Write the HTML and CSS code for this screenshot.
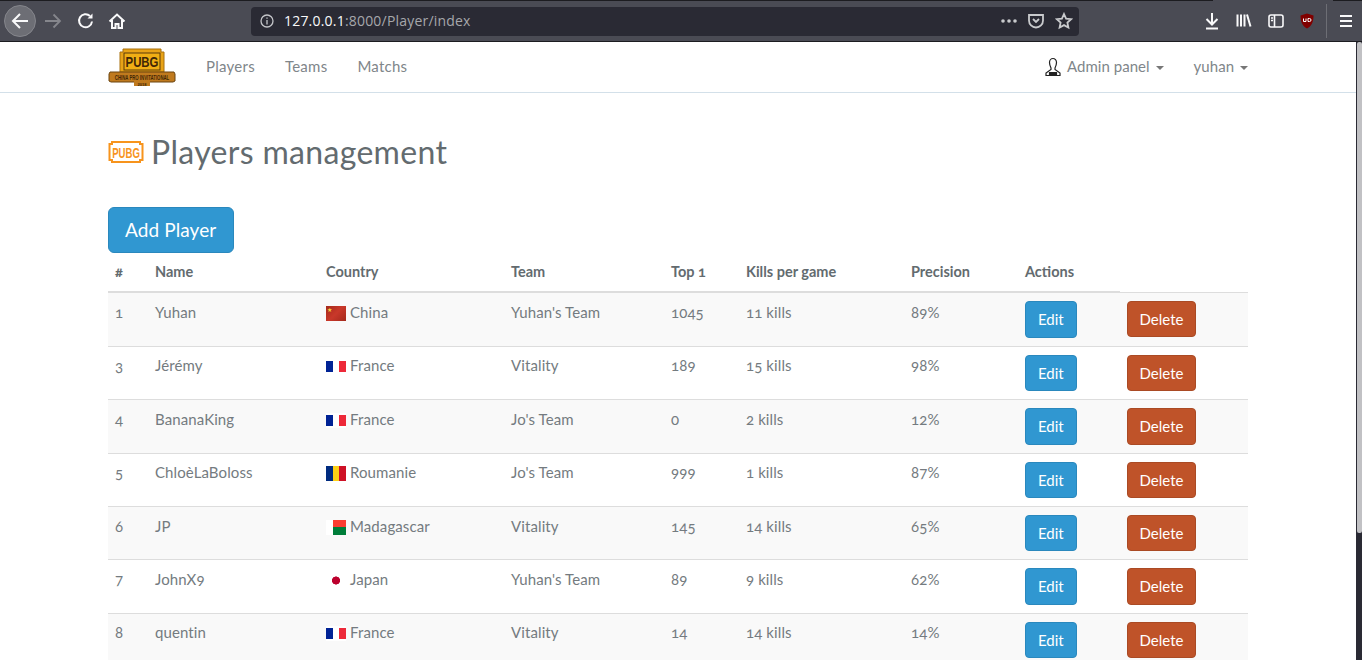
FILE: index.html
```html
<!DOCTYPE html>
<html>
<head>
  <title>Players management</title>
  <link rel="stylesheet" href="styles.css">
</head>
<body>
  <div class="chrome">
    <div class="chrome-left">
      <span class="round-btn">
        <svg width="20" height="20" viewBox="0 0 20 20" fill="none" stroke="#f9f9fa" stroke-width="2"><path d="M18 10H3M10 3l-7 7 7 7"/></svg>
      </span>
      <svg class="forward" width="18" height="18" viewBox="0 0 18 18" fill="none" stroke="#85868c" stroke-width="1.8"><path d="M1 9h15M9.500 2.500L16 9l-6.500 6.500"/></svg>
      <svg class="reload" width="18" height="18" viewBox="0 0 18 18" fill="none" stroke="#f9f9fa" stroke-width="2"><path d="M15 9.500A6.500 6.500 0 1 1 13 4"/><path d="M15.500 1.500v5h-5z" fill="#f9f9fa" stroke="none"/></svg>
      <svg class="home" width="18" height="18" viewBox="0 0 18 18" fill="none" stroke="#f9f9fa" stroke-width="2"><path d="M1.500 9.500L9 2.500l7.500 7M4 8v8h3.500v-4h3v4H14V8"/></svg>
    </div>
    <div class="urlbar">
      <svg class="info" width="14" height="14" viewBox="0 0 14 14" fill="none" stroke="#c4c5c9" stroke-width="1.3"><circle cx="7" cy="7" r="6"/><path d="M7 6v4.500M7 3.500v1.300"/></svg>
      <span class="url"><b>127.0.0.1</b>:8000/Player/index</span>
      <span class="url-tools">
        <svg width="16" height="4" viewBox="0 0 16 4" fill="#c9cacd"><circle cx="2" cy="2" r="1.8"/><circle cx="8" cy="2" r="1.8"/><circle cx="14" cy="2" r="1.8"/></svg>
        <svg width="18" height="18" viewBox="0 0 18 18" fill="none" stroke="#c9cacd" stroke-width="1.8"><path d="M2 3h14v5.500a7 7 0 0 1-14 0z"/><path d="M6 7l3 3 3-3"/></svg>
        <svg width="18" height="18" viewBox="0 0 18 18" fill="none" stroke="#c9cacd" stroke-width="1.8"><path d="M9 2l2.100 4.600 5 .6-3.700 3.400 1 5L9 13.100 4.600 15.600l1-5L1.900 7.200l5-.6z"/></svg>
      </span>
    </div>
    <div class="chrome-right">
      <svg width="16" height="18" viewBox="0 0 16 18" fill="none" stroke="#f9f9fa" stroke-width="2"><path d="M8 1v11M2.500 7L8 12.500 13.500 7M2 16.500h12"/></svg>
      <svg width="16" height="18" viewBox="0 0 16 18" fill="none" stroke="#f9f9fa" stroke-width="2"><path d="M1.500 2.500v12M5 2.500v12M8.500 2.500v12M11 2.500l3.500 12"/></svg>
      <svg width="16" height="14" viewBox="0 0 16 14" fill="none" stroke="#f9f9fa" stroke-width="1.6"><rect x="1" y="1" width="14" height="12" rx="2"/><path d="M6.500 1v12M3 4h2M3 6.500h2"/></svg>
      <svg class="ublock" width="14" height="16" viewBox="0 0 14 16"><path d="M7 .5l6.500 2c0 6-1.500 10.500-6.500 13C2 13 .5 8.500.5 2.500z" fill="#800000"/><path d="M3.500 5.500v3h2.500v-3M8 5.500v3h1.500a1.500 1.500 0 0 0 0-3z" fill="none" stroke="#fff"/></svg>
      <span class="chrome-sep"></span>
      <svg class="menu" width="14" height="12" viewBox="0 0 14 12" fill="none" stroke="#f9f9fa" stroke-width="2"><path d="M1 1h12M1 6h12M1 11h12"/></svg>
    </div>
  </div>

  <div class="page">
    <nav class="navbar">
      <div class="container nav-inner">
        <div class="nav-left">
          <svg class="logo" width="68" height="38" viewBox="0 0 68 38">
            <path d="M15 1h38v3h3v20H12V4h3z" fill="#e8a317" stroke="#a8700f"/>
            <rect x="16" y="5" width="36" height="17" fill="#f0ae14" stroke="#5a3a0a"/>
            <text transform="translate(34 19) scale(.76 1)" text-anchor="middle" class="logo-big">PUBG</text>
            <path d="M2 24h64l1 2v7l-2 1H3l-2-1v-7z" fill="#c07a1e" stroke="#6b4510"/>
            <rect x="26" y="33" width="16" height="5" fill="#c07a1e"/>
            <text transform="translate(34 31.500) scale(.66 1)" text-anchor="middle" class="logo-small">CHINA PRO INVITATIONAL</text>
            <text x="34" y="37.500" text-anchor="middle" class="logo-year">2018</text>
          </svg>
          <a class="nav-link">Players</a>
          <a class="nav-link">Teams</a>
          <a class="nav-link">Matchs</a>
        </div>
        <div class="nav-right">
          <svg class="admin-icon" width="18" height="19" viewBox="0 0 18 19" fill="none" stroke="#222" stroke-width="1.2"><path d="M5.500 5.500a3.500 4 0 0 1 7 0c0 2.500-1 4.500-1.500 5.500v1.500l5 3.500v2.500H2V16l5-3.500V11c-.5-1-1.500-3-1.500-5.500z"/><path d="M5.500 15.500h7v3h-7z" fill="#222"/></svg>
          <a class="nav-link with-caret">Admin panel <span class="caret"></span></a>
          <a class="nav-link with-caret user">yuhan <span class="caret"></span></a>
        </div>
      </div>
    </nav>

    <div class="container">
      <h1 class="title">
        <svg class="title-icon" width="36" height="24" viewBox="0 0 36 24">
          <path d="M4 2h28v2h2.500v16H32v2H4v-2H1.500V4H4z" fill="#fff" stroke="#f7941d" stroke-width="2"/>
          <text transform="translate(18 17.500) scale(.64 1)" text-anchor="middle" class="title-badge">PUBG</text>
        </svg>
        Players management
      </h1>
      <a class="btn btn-lg btn-primary">Add Player</a>

      <table class="players">
        <thead>
          <tr>
            <th class="c-id">#</th>
            <th class="c-name">Name</th>
            <th class="c-country">Country</th>
            <th class="c-team">Team</th>
            <th class="c-top">Top 1</th>
            <th class="c-kills">Kills per game</th>
            <th class="c-prec">Precision</th>
            <th class="c-edit">Actions</th>
            <th class="c-del"></th>
          </tr>
        </thead>
        <tbody>
          <tr>
            <td>1</td><td>Yuhan</td>
            <td><span class="flag flag-cn"><i class="star">★</i></span>China</td>
            <td>Yuhan's Team</td><td>1045</td><td>11 kills</td><td>89%</td>
            <td><a class="btn btn-primary">Edit</a></td><td><a class="btn btn-danger">Delete</a></td>
          </tr>
          <tr>
            <td>3</td><td>Jérémy</td>
            <td><span class="flag flag-fr"></span>France</td>
            <td>Vitality</td><td>189</td><td>15 kills</td><td>98%</td>
            <td><a class="btn btn-primary">Edit</a></td><td><a class="btn btn-danger">Delete</a></td>
          </tr>
          <tr>
            <td>4</td><td>BananaKing</td>
            <td><span class="flag flag-fr"></span>France</td>
            <td>Jo's Team</td><td>0</td><td>2 kills</td><td>12%</td>
            <td><a class="btn btn-primary">Edit</a></td><td><a class="btn btn-danger">Delete</a></td>
          </tr>
          <tr>
            <td>5</td><td>ChloèLaBoloss</td>
            <td><span class="flag flag-ro"></span>Roumanie</td>
            <td>Jo's Team</td><td>999</td><td>1 kills</td><td>87%</td>
            <td><a class="btn btn-primary">Edit</a></td><td><a class="btn btn-danger">Delete</a></td>
          </tr>
          <tr>
            <td>6</td><td>JP</td>
            <td><span class="flag flag-mg"></span>Madagascar</td>
            <td>Vitality</td><td>145</td><td>14 kills</td><td>65%</td>
            <td><a class="btn btn-primary">Edit</a></td><td><a class="btn btn-danger">Delete</a></td>
          </tr>
          <tr>
            <td>7</td><td>JohnX9</td>
            <td><span class="flag flag-jp"></span>Japan</td>
            <td>Yuhan's Team</td><td>89</td><td>9 kills</td><td>62%</td>
            <td><a class="btn btn-primary">Edit</a></td><td><a class="btn btn-danger">Delete</a></td>
          </tr>
          <tr>
            <td>8</td><td>quentin</td>
            <td><span class="flag flag-fr"></span>France</td>
            <td>Vitality</td><td>14</td><td>14 kills</td><td>14%</td>
            <td><a class="btn btn-primary">Edit</a></td><td><a class="btn btn-danger">Delete</a></td>
          </tr>
        </tbody>
      </table>
    </div>
    <div class="scrollbar"><div class="thumb"></div></div>
  </div>
</body>
</html>
```

FILE: styles.css
```css
* {
  box-sizing: border-box;
}
html, body {
  height: 100%;
  overflow: hidden;
}
body {
  margin: 0;
  font-family: Lato, "Open Sans", sans-serif;
  font-size: 15px;
  line-height: 1.42857;
  color: #747b80;
  background: #fff;
  font-variant-numeric: oldstyle-nums;
}

/* browser bar */
.chrome {
  height: 42px;
  display: flex;
  align-items: center;
  position: relative;
  background: #4a4b54;
  border-top: 1px solid #1c1c20;
  border-bottom: 1px solid #1c1c20;
}
.chrome::before {
  content: "";
  position: absolute;
  top: -1px;
  left: 1213px;
  width: 120px;
  height: 1px;
  background: #4a4b54;
}
.chrome-left {
  width: 251px;
  display: flex;
  align-items: center;
  padding-left: 4px;
  flex: none;
}
.round-btn {
  width: 32px;
  height: 32px;
  border-radius: 50%;
  background: #6d6e75;
  border: 1px solid #85868c;
  display: flex;
  align-items: center;
  justify-content: center;
}
.forward {
  margin-left: 8px;
}
.reload {
  margin-left: 15px;
}
.home {
  margin-left: 13px;
}
.urlbar {
  width: 828px;
  height: 29px;
  flex: none;
  display: flex;
  align-items: center;
  background: #2a2a34;
  border-radius: 4px;
  padding: 0 6px 0 9px;
  font-family: "Open Sans", sans-serif;
  font-size: 14px;
  letter-spacing: .2px;
  color: #a6a7ab;
  font-variant-numeric: lining-nums;
}
.url {
  margin-left: 10px;
}
.url b {
  font-weight: 400;
  color: #f9f9fa;
}
.url-tools {
  margin-left: auto;
  display: flex;
  align-items: center;
  gap: 10px;
}
.chrome-right {
  flex: 1;
  display: flex;
  align-items: center;
  padding-left: 125px;
  gap: 16px;
}
.chrome-sep {
  width: 1px;
  height: 34px;
  background: #6d6e75;
  margin-left: -4px;
}
.menu {
  margin-left: -4px;
}

/* app */
.page {
  height: 618px;
  overflow: hidden;
  position: relative;
}
.scrollbar {
  position: absolute;
  top: 0;
  right: 0;
  width: 6px;
  height: 100%;
  background: #2a2a34;
}
.thumb {
  width: 5px;
  height: 491px;
  margin-left: 1px;
  background: #c1c1c4;
  border-radius: 2px;
}
.container {
  width: 1140px;
  margin-left: 108px;
}
.navbar {
  height: 51px;
  border-bottom: 1px solid #d3e0e9;
}
.nav-inner {
  height: 50px;
  display: flex;
  align-items: center;
  justify-content: space-between;
}
.nav-left, .nav-right {
  display: flex;
  align-items: center;
}
.logo {
  margin-right: 30px;
}
.logo-big {
  font-family: "Liberation Sans", sans-serif;
  font-size: 15px;
  font-weight: 700;
  fill: #3f2706;
}
.logo-small {
  font-family: "Liberation Sans", sans-serif;
  font-size: 6.5px;
  font-weight: 700;
  fill: #3f2706;
}
.logo-year {
  font-family: "Liberation Sans", sans-serif;
  font-size: 4px;
  font-weight: 700;
  fill: #3f2706;
}
.nav-link {
  font-size: 15px;
  letter-spacing: .25px;
  color: #80868a;
  margin-right: 30px;
}
.nav-right .nav-link {
  letter-spacing: .05px;
}
.nav-left .nav-link:last-child,
.nav-right .nav-link:last-child {
  margin-right: 0;
}
.admin-icon {
  margin-right: 5px;
}
.caret {
  display: inline-block;
  width: 0;
  height: 0;
  margin-left: 2px;
  vertical-align: middle;
  border-top: 4px solid #777;
  border-left: 4px solid transparent;
  border-right: 4px solid transparent;
}
.title {
  margin: 39px 0 35px;
  height: 40px;
  display: flex;
  align-items: center;
  font-size: 32px;
  font-weight: 400;
  letter-spacing: .33px;
  line-height: 40px;
  color: #636b6f;
}
.title-icon {
  margin-right: 7px;
}
.title-badge {
  font-family: "Liberation Sans", sans-serif;
  font-size: 15px;
  font-weight: 700;
  letter-spacing: 0;
  fill: #f7941d;
}

.btn {
  display: inline-block;
  padding: 6px 12px;
  font-size: 15px;
  line-height: 22.4px;
  border: 1px solid transparent;
  border-radius: 4px;
  color: #fff;
  text-align: center;
}
.btn-lg {
  padding: 10px 17px 10px 16px;
  font-size: 19px;
  letter-spacing: .1px;
  line-height: 24px;
  border-radius: 6px;
  height: 46px;
}
.btn-primary {
  background: #3097d1;
  border-color: #2a88bd;
}
.btn-danger {
  background: #bf5329;
  border-color: #aa4a24;
}

.players {
  width: 1140px;
  border-collapse: collapse;
  table-layout: fixed;
}
.players th {
  text-align: left;
  font-weight: 700;
  font-size: 14.5px;
  color: #636b6f;
  padding: 8px 7px 9px;
  height: 39.3px;
  border-bottom: 2px solid #ddd;
  vertical-align: bottom;
}
.players th.c-del {
  border-bottom: none;
}
.players td {
  padding: 8.6px 7px 8px;
  font-size: 15px;
  letter-spacing: .1px;
  border-top: 1px solid #ddd;
  vertical-align: top;
  height: 53.4px;
}
.players tbody tr:nth-child(odd) {
  background: #f9f9f9;
}
.players .btn {
  vertical-align: top;
  margin-top: -.6px;
  letter-spacing: 0;
}
.players .btn-danger {
  padding: 6px 11.5px;
}
.c-id { width: 40px; }
.c-name { width: 171px; }
.c-country { width: 185px; }
.c-team { width: 160px; }
.c-top { width: 75px; }
.c-kills { width: 165px; }
.c-prec { width: 114px; }
.c-edit { width: 102px; }

.flag {
  display: inline-block;
  width: 20px;
  height: 15px;
  margin-right: 4px;
  vertical-align: -3px;
  position: relative;
  overflow: hidden;
}
.flag-cn {
  background: linear-gradient(135deg, #a52a1a, #c9382a 50%, #a32a1c);
}
.star {
  position: absolute;
  left: 1px;
  top: 1px;
  font-size: 6px;
  line-height: 6px;
  font-style: normal;
  color: #f6d13b;
}
.flag-fr {
  background:
    linear-gradient(90deg, #002395 0 7px, #fff 7px 13px, #ed2939 13px) no-repeat 0 2px / 100% 11px,
    #fff;
}
.flag-ro {
  background: linear-gradient(90deg, #002b7f 0 7px, #fcd116 7px 13px, #ce1126 13px);
}
.flag-mg {
  background:
    linear-gradient(#fc3d32 0 50%, #007e3a 50%) no-repeat 7px 0 / 13px 100%,
    #fff;
}
.flag-jp {
  background: radial-gradient(circle at 10px 7.5px, #bc002d 0 3.8px, #fff 4.3px);
}
```
